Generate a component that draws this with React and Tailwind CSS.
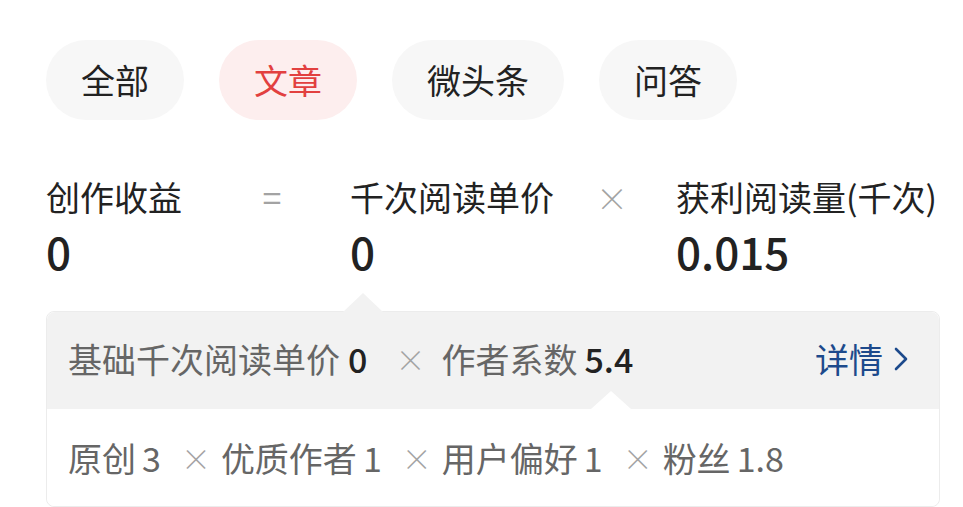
import React, { useState } from 'react';

const FONT = { fontFamily: '"Noto Sans CJK SC", "Noto Sans", sans-serif' };

const tabs = ['全部', '文章', '微头条', '问答'];

const factors = [
  { label: '原创', value: '3' },
  { label: '优质作者', value: '1' },
  { label: '用户偏好', value: '1' },
  { label: '粉丝', value: '1.8' },
];

const Times = ({ className = '' }) => (
  <span className={`inline-block w-[20px] text-center text-[#a3a3a3] text-[30px] font-light ${className}`}>×</span>
);

const App = () => {
  const [active, setActive] = useState('文章');

  return (
    <div className="w-[963px] h-[507px] overflow-hidden bg-white pl-[46px] pt-[40px]" style={FONT}>
      {/* Category tabs */}
      <div className="flex gap-[35px]">
        {tabs.map((t) => (
          <button
            key={t}
            onClick={() => setActive(t)}
            className={`h-[80px] px-[35px] rounded-full text-[34px] leading-none ${
              t === active ? 'bg-[#fdeeee] text-[#e2403f]' : 'bg-[#f7f7f7] text-[#222]'
            }`}
          >
            {t}
          </button>
        ))}
      </div>

      {/* Revenue formula */}
      <div className="flex items-start mt-[57px] text-[#222]">
        <div className="w-[204px]">
          <div className="text-[34px] leading-[40px]">创作收益</div>
          <div className="mt-[6px] text-[44px] leading-[56px] font-medium">0</div>
        </div>
        <div className="w-[44px] text-center text-[34px] leading-[40px] text-[#a3a3a3]">=</div>
        <div className="w-[240px] ml-[56px]">
          <div className="text-[34px] leading-[40px]">千次阅读单价</div>
          <div className="mt-[6px] text-[44px] leading-[56px] font-medium">0</div>
        </div>
        <div className="w-[44px] text-center text-[32px] leading-[40px] text-[#a3a3a3] font-light">×</div>
        <div className="ml-[42px]">
          <div className="text-[34px] leading-[40px] whitespace-nowrap">获利阅读量(千次)</div>
          <div className="mt-[6px] text-[44px] leading-[56px] font-medium">0.015</div>
        </div>
      </div>

      {/* Breakdown card */}
      <div className="relative mt-[32px] w-[894px] rounded-[8px] border border-[#ececec]">
        <div className="absolute -top-[19px] left-[296px] w-[40px] h-[19px] bg-[#f2f2f2] [clip-path:polygon(50%_0,100%_100%,0_100%)]" />
        <div className="flex items-center h-[97px] bg-[#f2f2f2] rounded-t-[8px] pl-[21px] pr-[30px] pb-[4px] text-[34px]">
          <span className="text-[#666]">基础千次阅读单价</span>
          <span className="ml-[8px] text-[#222] font-medium">0</span>
          <Times className="ml-[28px] mr-[26px]" />
          <span className="text-[#666]">作者系数</span>
          <span className="ml-[7px] text-[#222] font-medium">5.4</span>
          <span className="ml-auto flex items-center text-[#1d4a8c]">
            详情
            <svg width="16" height="26" viewBox="0 0 16 26" className="ml-[10px]" fill="none">
              <path d="M3 3l10 10-10 10" stroke="#1d4a8c" strokeWidth="2.6" strokeLinecap="round" strokeLinejoin="round" />
            </svg>
          </span>
        </div>
        <div className="relative flex items-center h-[97px] bg-white rounded-b-[8px] pl-[21px] text-[34px] text-[#666]">
          <div className="absolute -top-[18px] left-[544px] w-[40px] h-[18px] bg-white [clip-path:polygon(50%_0,100%_100%,0_100%)]" />
          {factors.map((f, i) => (
            <React.Fragment key={f.label}>
              {i > 0 && <Times className="ml-[20px] mr-[20px]" />}
              <span>{f.label}</span>
              <span className="ml-[6px]">{f.value}</span>
            </React.Fragment>
          ))}
        </div>
      </div>
    </div>
  );
};

export default App;
